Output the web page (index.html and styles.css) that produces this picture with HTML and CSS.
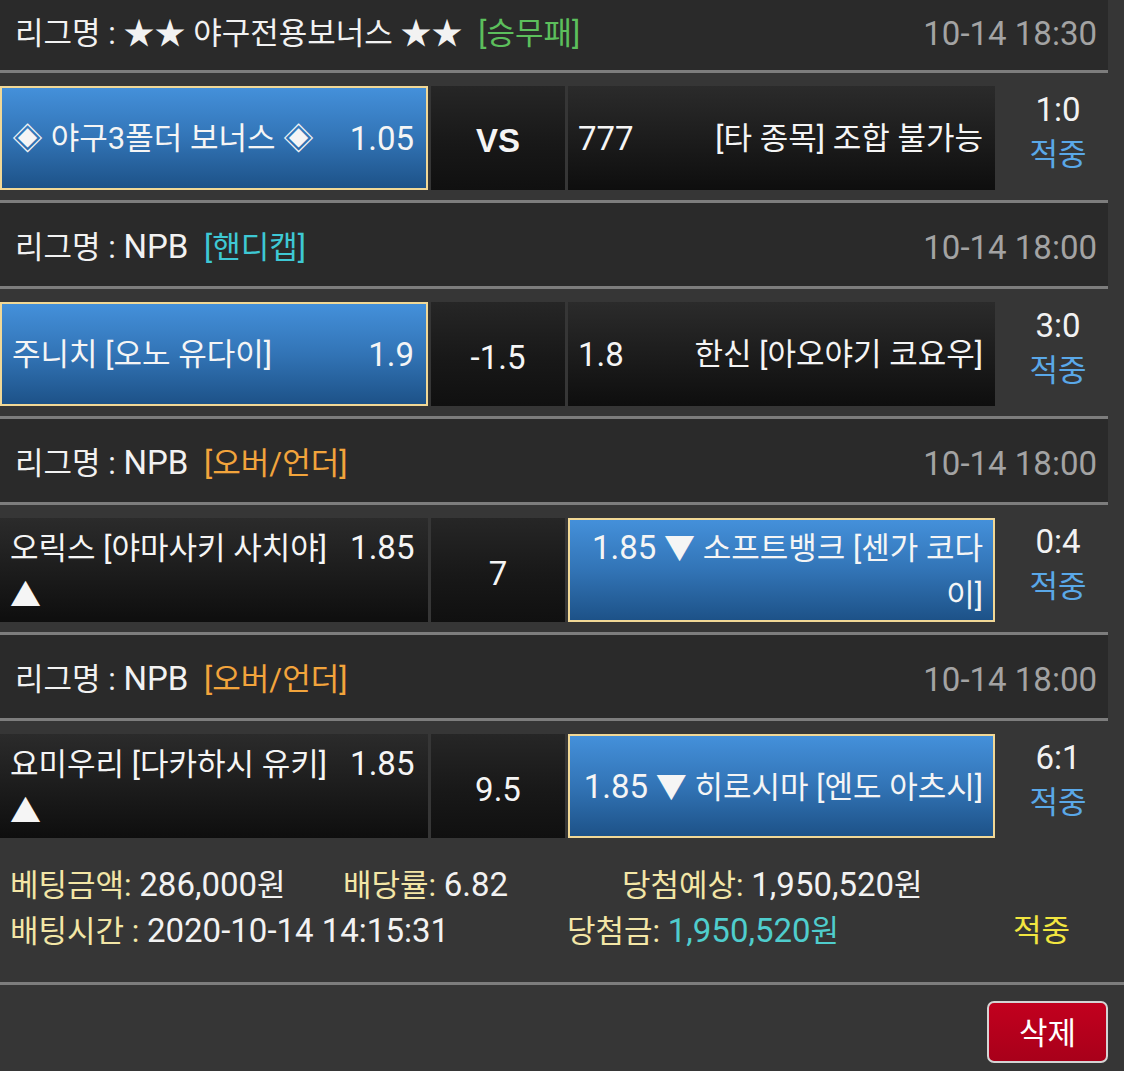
FILE: index.html
```html
<!DOCTYPE html>
<html lang="ko">
<head>
<meta charset="utf-8">
<title>베팅내역</title>
<link rel="stylesheet" href="styles.css">
</head>
<body>
<div class="bets">
  <section class="bet-block first">
    <div class="league">
      <span class="league-name">리그명 : ★★ 야구전용보너스 ★★ <span class="tag tag-green">[승무패]</span></span>
      <span class="time num">10-14 18:30</span>
    </div>
    <div class="match">
      <div class="cell pick split"><span>◈ 야구3폴더 보너스 ◈</span><span class="num">1.05</span></div>
      <div class="cell mid bold">VS</div>
      <div class="cell dark split"><span class="num">777</span><span>[타 종목] 조합 불가능</span></div>
      <div class="score"><span class="num">1:0</span><span class="hit">적중</span></div>
    </div>
  </section>

  <section class="bet-block">
    <div class="league">
      <span class="league-name">리그명 : <span class="num">NPB</span> <span class="tag tag-cyan">[핸디캡]</span></span>
      <span class="time num">10-14 18:00</span>
    </div>
    <div class="match">
      <div class="cell pick split"><span>주니치 [오노 유다이]</span><span class="num">1.9</span></div>
      <div class="cell mid num">-1.5</div>
      <div class="cell dark split"><span class="num">1.8</span><span>한신 [아오야기 코요우]</span></div>
      <div class="score"><span class="num">3:0</span><span class="hit">적중</span></div>
    </div>
  </section>

  <section class="bet-block">
    <div class="league">
      <span class="league-name">리그명 : <span class="num">NPB</span> <span class="tag tag-orange">[오버/언더]</span></span>
      <span class="time num">10-14 18:00</span>
    </div>
    <div class="match">
      <div class="cell dark flow"><p class="flow-text">오릭스 [야마사키 사치야]&nbsp;&nbsp; <span class="num">1.85</span> ▲</p></div>
      <div class="cell mid num">7</div>
      <div class="cell pick flow right"><p class="flow-text"><span class="num">1.85</span> ▼ 소프트뱅크 [센가 코다이]</p></div>
      <div class="score"><span class="num">0:4</span><span class="hit">적중</span></div>
    </div>
  </section>

  <section class="bet-block last">
    <div class="league">
      <span class="league-name">리그명 : <span class="num">NPB</span> <span class="tag tag-orange">[오버/언더]</span></span>
      <span class="time num">10-14 18:00</span>
    </div>
    <div class="match">
      <div class="cell dark flow"><p class="flow-text">요미우리 [다카하시 유키]&nbsp;&nbsp; <span class="num">1.85</span> ▲</p></div>
      <div class="cell mid num">9.5</div>
      <div class="cell pick flow right"><p class="flow-text"><span class="num">1.85</span> ▼ 히로시마 [엔도 아츠시]</p></div>
      <div class="score"><span class="num">6:1</span><span class="hit">적중</span></div>
    </div>
  </section>
</div>

<div class="summary">
  <div class="sum-row row-a">
    <span><span class="label">베팅금액:</span> <span class="num">286,000</span>원</span>
    <span><span class="label">배당률:</span> <span class="num">6.82</span></span>
    <span><span class="label">당첨예상:</span> <span class="num">1,950,520</span>원</span>
  </div>
  <div class="sum-row row-b">
    <span><span class="label">배팅시간 :</span> <span class="num">2020-10-14 14:15:31</span></span>
    <span><span class="label">당첨금:</span> <span class="win"><span class="num">1,950,520</span>원</span></span>
    <span class="result">적중</span>
  </div>
</div>

<div class="actions">
  <button class="delete-btn" type="button">삭제</button>
</div>
</body>
</html>
```

FILE: styles.css
```css
* { box-sizing: border-box; }

html, body {
  margin: 0;
  padding: 0;
}

body {
  background: #363636;
  color: #f2f2f2;
  font-family: "Roboto", "Noto Sans CJK KR", sans-serif;
  font-size: 31px;
  width: 1124px;
  height: 1071px;
  overflow: hidden;
}

.num {
  font-size: 33px;
}

.bets {
  width: 1108px;
}

.bet-block {
  border-top: 3px solid #7d7d7d;
}

.bet-block.first {
  border-top: none;
}

.league {
  height: 86px;
  background: #2a2a2a;
  border-bottom: 3px solid #7d7d7d;
  display: flex;
  align-items: center;
  justify-content: space-between;
  padding: 6px 11px 0 15px;
  line-height: 40px;
}

.first .league {
  height: 73px;
  padding-top: 0;
  padding-bottom: 2px;
}

.time {
  color: #a3a3a3;
}

.tag { margin-left: 8px; }
.tag-green { color: #5cbf5c; }
.tag-cyan { color: #3ec8d4; }
.tag-orange { color: #f2a43c; }

.match {
  display: flex;
  align-items: stretch;
  gap: 3px;
  padding: 13px 0 10px;
}

.last .match {
  padding-bottom: 0;
}

.cell {
  height: 104px;
  color: #f5f5f5;
  line-height: 47px;
}

.cell:nth-child(1) { width: 428px; }
.cell:nth-child(2) { width: 134px; }
.cell:nth-child(3) { width: 427px; }

.dark {
  background: linear-gradient(to bottom, #2b2b2b 0%, #1b1b1b 55%, #0e0e0e 100%);
}

.pick {
  background: linear-gradient(to bottom, #4490da 0%, #3274b6 50%, #1d5288 100%);
  border: 2px solid #f1d896;
}

.mid {
  background: linear-gradient(to bottom, #262626 0%, #181818 55%, #101010 100%);
  display: flex;
  align-items: center;
  justify-content: center;
  padding-top: 6px;
}

.bold {
  font-weight: bold;
  font-family: "Liberation Sans", "Roboto", sans-serif;
  font-size: 33px;
  padding-top: 4px;
}

.split {
  display: flex;
  align-items: center;
  justify-content: space-between;
  padding: 0 12px 0 10px;
}

.flow {
  display: flex;
  align-items: center;
  padding: 2px 10px 0;
}

.flow.right {
  justify-content: flex-end;
  text-align: right;
  padding: 2px 10px 0 6px;
}

.flow-text {
  margin: 0;
}

.score {
  flex: 1;
  display: flex;
  flex-direction: column;
  align-items: center;
  justify-content: center;
  line-height: 45px;
  padding: 0 0 12px 10px;
}

.hit {
  color: #5aa8e8;
}

.summary {
  padding: 24px 0 28px 10px;
  line-height: 45px;
}

.sum-row {
  display: grid;
  white-space: nowrap;
}

.row-a {
  grid-template-columns: 333px 279px auto;
}

.row-b {
  grid-template-columns: 557px 446px auto;
}

.label {
  color: #f3e6a6;
}

.win {
  color: #4fcdcd;
}

.result {
  color: #f2e640;
}

.actions {
  border-top: 3px solid #7d7d7d;
  display: flex;
  justify-content: flex-end;
  padding: 16px 16px 0 0;
}

.delete-btn {
  width: 121px;
  height: 62px;
  border: 2px solid #d4d4d4;
  border-radius: 7px;
  background: linear-gradient(to bottom, #c2001e 0%, #a8001a 100%);
  color: #ffffff;
  font-family: "Roboto", "Noto Sans CJK KR", sans-serif;
  font-size: 31px;
  padding: 0 0 4px;
}
```
